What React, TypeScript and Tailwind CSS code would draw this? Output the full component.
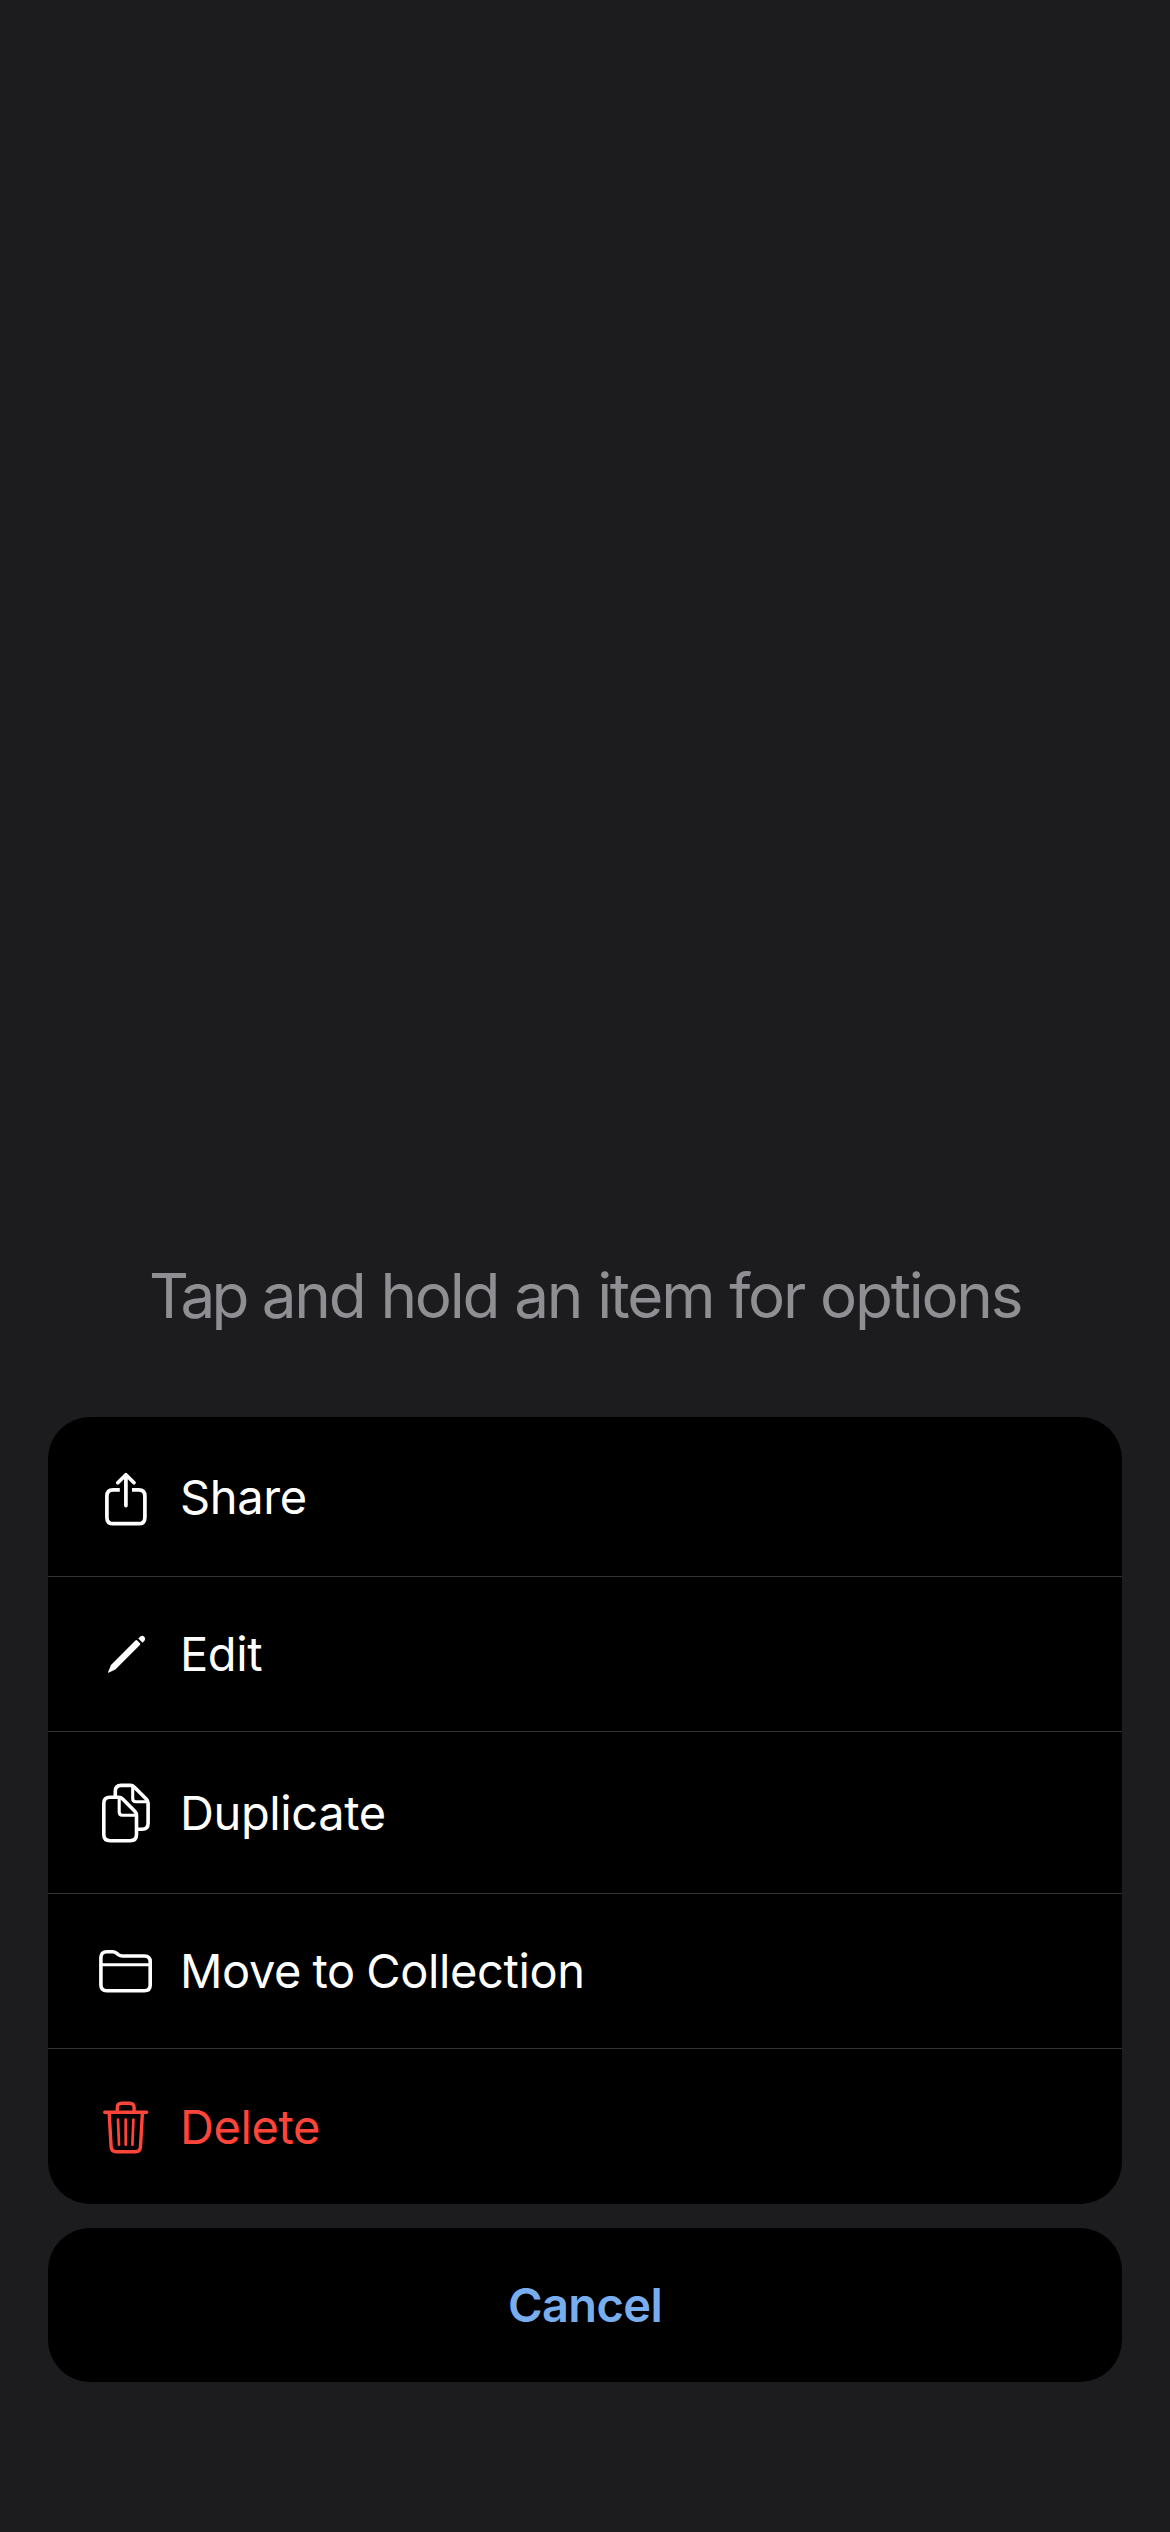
import type { ReactNode } from "react";

const iconClass = "block h-[72px] w-[72px] shrink-0 overflow-visible";

function ShareIcon() {
  return (
    <svg viewBox="0 0 72 72" className={iconClass} fill="none" stroke="currentColor" strokeWidth="3.7" strokeLinecap="round" strokeLinejoin="round">
      <path strokeLinecap="butt" d="M29.8 28.9H23.2Q16.9 28.9 16.9 35.2V56.4Q16.9 62.7 23.2 62.7H48.6Q54.9 62.7 54.9 56.4V35.2Q54.9 28.9 48.6 28.9H42" />
      <path d="M35.9 44.6V14M27.8 21.8L35.9 13.7L44 21.8" />
    </svg>
  );
}

function PencilIcon() {
  return (
    <svg viewBox="0 0 72 72" className={iconClass} fill="currentColor">
      <path d="M18 54.2L21 47L45.4 22.5Q46.3 21.7 47.2 22.5L50 25.3Q50.8 26.1 49.9 27L25.4 51.4L19 54.6Q18 55 18 54.2Z" />
      <path d="M48.3 20.4L50.4 18.4Q52.4 17 54.3 18.7Q56 20.6 54.6 22.6L52.6 24.7Z" />
    </svg>
  );
}

function DuplicateIcon() {
  return (
    <svg viewBox="0 0 72 72" className={iconClass} fill="none" stroke="currentColor" strokeWidth="3.6" strokeLinejoin="round">
      <path d="M25.3 19V14.3Q25.3 8.4 31.2 8.4H40.5Q42.6 8.4 44.2 10L56.5 22.3Q58.1 24 58.1 26.2V46.3Q58.1 52.3 52.1 52.3H48" />
      <path strokeWidth="3.1" d="M42.7 9.5V21.6Q42.7 24.8 45.9 24.8H57" />
      <path d="M20 20.3H28.6Q31 20.3 32.7 22L44.8 34.3Q46.5 36.2 46.5 38.5V57.5Q46.5 63.7 40.2 63.7H20Q13.8 63.7 13.8 57.5V26.5Q13.8 20.3 20 20.3Z" />
      <path strokeWidth="3.1" d="M29.2 21.3V34.9Q29.2 38.2 32.5 38.2H46" />
    </svg>
  );
}

function FolderIcon() {
  return (
    <svg viewBox="0 0 72 72" className={iconClass} fill="none" stroke="currentColor" strokeWidth="3.6" strokeLinejoin="round">
      <path d="M16.7 16.8H22.5Q25 16.8 26.8 18.3L28.3 19.6Q30 21 32.5 21H54.4Q60.2 21 60.2 26.8V50Q60.2 55.8 54.4 55.8H16.7Q10.9 55.8 10.9 50V22.6Q10.9 16.8 16.7 16.8Z" />
      <path strokeWidth="3.1" d="M11 29.7H60" />
    </svg>
  );
}

function TrashIcon() {
  return (
    <svg viewBox="0 0 72 72" className={iconClass} fill="none" stroke="currentColor" strokeWidth="3.4" strokeLinecap="round" strokeLinejoin="round">
      <path d="M14.7 21.2H56.7M27.3 21V16.7Q27.3 12.2 31.8 12.2H39.6Q44.1 12.2 44.1 16.7V21" />
      <path d="M19.2 22L21.1 55.7Q21.4 60.8 26.4 60.8H45.4Q50.2 60.8 50.5 55.7L52.4 22" />
      <path strokeWidth="2.7" d="M28 28.5L29 53.7M35.7 28.5V53.7M43.4 28.5L42.4 53.7" />
    </svg>
  );
}

function Row({ icon, label, className }: { icon: ReactNode; label: string; className: string }) {
  return (
    <button className={`flex w-full items-center gap-[18px] pl-[42px] text-left text-[47px] leading-[58px] tracking-[-0.38px] [word-spacing:-1.4px] ${className}`}>
      {icon}
      <span>{label}</span>
    </button>
  );
}

export default function App() {
  return (
    <main className="flex h-[2532px] w-[1170px] flex-col bg-[#1c1c1e] px-12 font-['Inter',sans-serif] text-white">
      <p className="mt-[1258px] text-center text-[62px] leading-[76px] tracking-[-2.28px] whitespace-nowrap text-[#8e8e93] [word-spacing:0.9px]">
        <span className="tracking-[-3.8px]">Tap</span> and hold an item for options
      </p>
      <section className="mt-[83px] overflow-hidden rounded-[42px] bg-black">
        <Row icon={<ShareIcon />} label="Share" className="h-[160px] border-b border-[#333335]" />
        <Row icon={<PencilIcon />} label="Edit" className="h-[155px] border-b border-[#333335]" />
        <Row icon={<DuplicateIcon />} label="Duplicate" className="h-[162px] border-b border-[#333335]" />
        <Row icon={<FolderIcon />} label="Move to Collection" className="h-[155px] border-b border-[#333335]" />
        <Row icon={<TrashIcon />} label="Delete" className="h-[155px] text-[#ff453a]" />
      </section>
      <button className="mt-6 h-[154px] rounded-[42px] bg-black text-[47px] leading-[58px] font-semibold tracking-[-0.6px] text-[#78aeee]">
        Cancel
      </button>
    </main>
  );
}
